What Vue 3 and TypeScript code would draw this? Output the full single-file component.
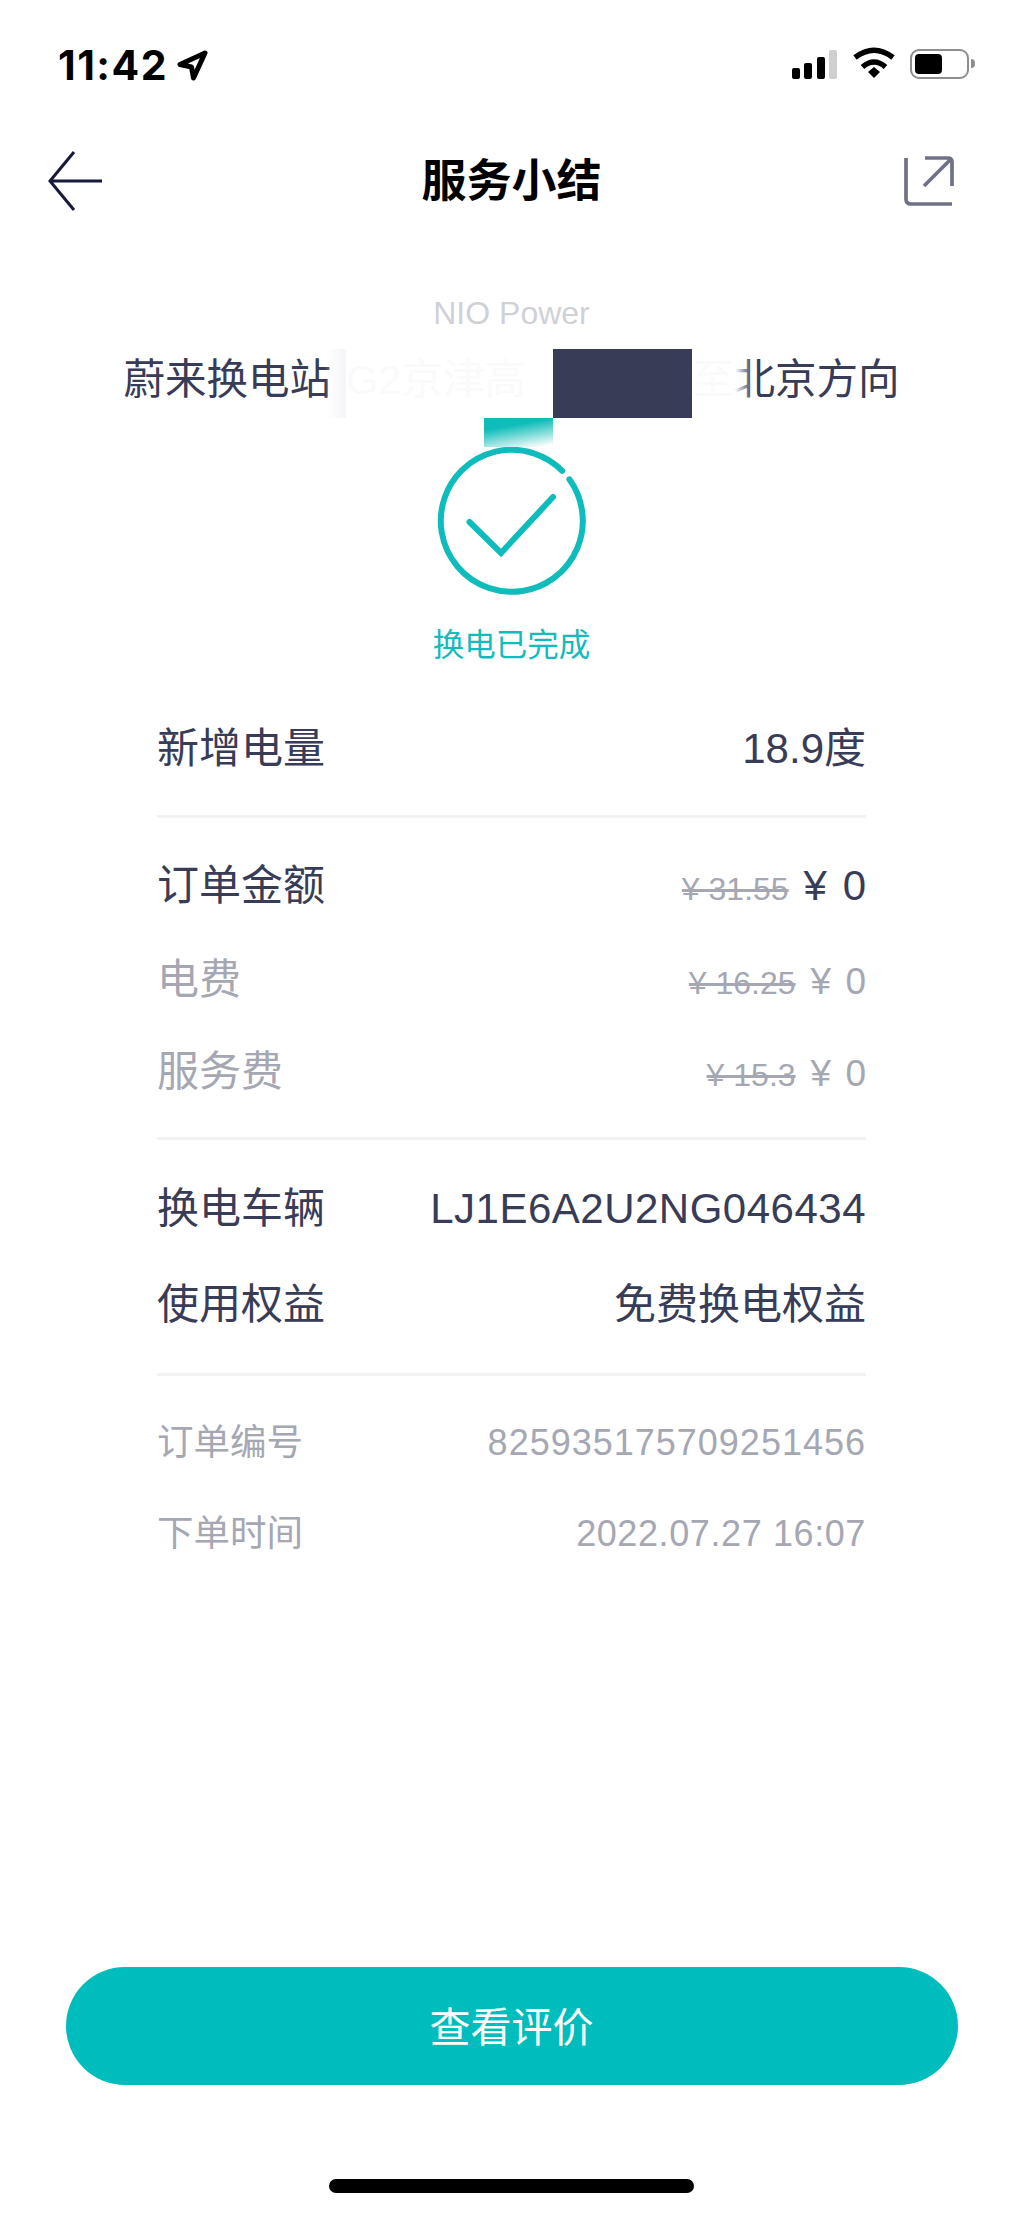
<template>
  <div class="page">
    <div class="status-bar">
      <div class="status-left">
        <span class="clock">11:42</span>
        <svg class="loc" width="32" height="32" viewBox="0 0 32 32">
          <path d="M28 4 L3 15.5 L14.5 18 L16.5 29 Z" fill="none" stroke="#000" stroke-width="5" stroke-linejoin="round" />
        </svg>
      </div>
      <div class="status-right">
        <div class="signal">
          <i class="bar b1"></i>
          <i class="bar b2"></i>
          <i class="bar b3"></i>
          <i class="bar b4"></i>
        </div>
        <svg class="wifi" width="44" height="32" viewBox="0 0 44 32">
          <path d="M3 10.5 Q22 -4 41 10.5" fill="none" stroke="#000" stroke-width="5.5" />
          <path d="M10.5 20 Q22 10 33.5 20" fill="none" stroke="#000" stroke-width="5.5" />
          <path d="M16 25 L22 20 L28 25 L22 31 Z" fill="#000" />
        </svg>
        <div class="battery">
          <div class="battery-fill"></div>
          <div class="battery-nub"></div>
        </div>
      </div>
    </div>

    <header class="nav">
      <svg class="back" width="56" height="60" viewBox="0 0 56 60">
        <path d="M54 30 H2 M26 1 L2 30 L26 59" fill="none" stroke="#16193a" stroke-width="3" />
      </svg>
      <h1 class="title">服务小结</h1>
      <svg class="share" width="50" height="50" viewBox="0 0 50 50">
        <path d="M2 2 V43 Q2 48 7 48 H48 M21 2 H44 Q48 2 48 6 V30 M46 4 L20 30" fill="none" stroke="#6f7186" stroke-width="3.7" />
      </svg>
    </header>

    <div class="brand">NIO Power</div>
    <div class="station">
      <span>蔚来换电站</span>
      <span class="faded faded-left">G2京津高</span>
      <span class="faded">至</span>
      <span>北京方向</span>
      <div class="smudge"></div>
      <div class="redact"></div>
      <div class="wipe"></div>
      <div class="teal-patch"></div>
    </div>

    <svg class="check" width="150" height="150" viewBox="0 0 150 150">
      <path d="M125.2 24.8 A71 71 0 1 0 132.4 33.3" fill="none" stroke="#0fbcbc" stroke-width="6" stroke-linecap="round" />
      <path d="M32.5 76 L64 107 L116 51" fill="none" stroke="#0fbcbc" stroke-width="6" stroke-linecap="round" />
    </svg>
    <div class="done">换电已完成</div>

    <div class="details">
      <section
        v-for="group in groups"
        :key="group.id"
        class="group"
        :class="`group--${group.id}`"
      >
        <div
          v-for="row in group.rows"
          :key="row.label"
          class="row"
          :class="row.kind"
        >
          <span class="label">{{ row.label }}</span>
          <span class="value">
            <s v-if="row.was" class="was">{{ row.was }}</s>
            <span :class="{ amount: row.was }">{{ row.value }}</span>
          </span>
        </div>
      </section>
    </div>

    <button type="button" class="cta">查看评价</button>
    <div class="home"></div>
  </div>
</template>

<script setup lang="ts">
type RowKind = 'main' | 'sub' | 'meta';

interface Row {
  label: string;
  value: string;
  was?: string;
  kind: RowKind;
}

const groups: { id: string; rows: Row[] }[] = [
  {
    id: 'energy',
    rows: [{ label: '新增电量', value: '18.9度', kind: 'main' }],
  },
  {
    id: 'price',
    rows: [
      { label: '订单金额', value: '¥ 0', was: '¥ 31.55', kind: 'main' },
      { label: '电费', value: '¥ 0', was: '¥ 16.25', kind: 'sub' },
      { label: '服务费', value: '¥ 0', was: '¥ 15.3', kind: 'sub' },
    ],
  },
  {
    id: 'car',
    rows: [
      { label: '换电车辆', value: 'LJ1E6A2U2NG046434', kind: 'main' },
      { label: '使用权益', value: '免费换电权益', kind: 'main' },
    ],
  },
  {
    id: 'order',
    rows: [
      { label: '订单编号', value: '825935175709251456', kind: 'meta' },
      { label: '下单时间', value: '2022.07.27 16:07', kind: 'meta' },
    ],
  },
];
</script>

<style>
html,
body {
  margin: 0;
  background: #fff;
}
</style>

<style scoped>
.page {
  width: 1023px;
  height: 2215px;
  display: flex;
  flex-direction: column;
  align-items: center;
  background: #fff;
  color: #383c56;
  font-family: 'Liberation Sans', 'Noto Sans CJK SC', sans-serif;
  overflow: hidden;
}

.status-bar {
  width: 100%;
  height: 126px;
  box-sizing: border-box;
  padding: 48px 54px 0 58px;
  display: flex;
  justify-content: space-between;
  align-items: flex-start;
}

.status-left {
  display: flex;
  align-items: center;
  gap: 9px;
}

.clock {
  font-family: Inter, sans-serif;
  font-size: 41px;
  font-weight: 700;
  line-height: 34px;
  letter-spacing: 1.5px;
  color: #000;
}

.status-right {
  display: flex;
  align-items: flex-end;
  height: 31px;
}

.signal {
  display: flex;
  align-items: flex-end;
  gap: 4.5px;
  height: 29px;
  margin-right: 15px;
}

.bar {
  width: 8px;
  border-radius: 2px;
  background: #000;
}

.b1 { height: 11px; }
.b2 { height: 16px; }
.b3 { height: 22px; }
.b4 { height: 29px; background: #cfcfcf; }

.wifi {
  margin-right: 14px;
}

.battery {
  position: relative;
  width: 59px;
  height: 30px;
  box-sizing: border-box;
  border: 2.5px solid #8e8e8e;
  border-radius: 9px;
  padding: 3px;
}

.battery-fill {
  width: 27px;
  height: 100%;
  background: #000;
  border-radius: 4px;
}

.battery-nub {
  position: absolute;
  right: -8px;
  top: 8px;
  width: 4px;
  height: 9px;
  background: #8e8e8e;
  border-radius: 0 4px 4px 0;
}

.nav {
  width: 100%;
  height: 110px;
  box-sizing: border-box;
  padding: 0 48px;
  display: grid;
  grid-template-columns: 1fr auto 1fr;
  align-items: center;
}

.share {
  justify-self: end;
  margin-right: 21px;
}

.title {
  margin: 0;
  padding-bottom: 8px;
  font-size: 45px;
  font-weight: 700;
  color: #000;
}

.brand {
  margin-top: 62px;
  font-size: 32px;
  line-height: 30px;
  color: #d0d1d6;
}

.station {
  position: relative;
  width: 776px;
  height: 69px;
  box-sizing: border-box;
  margin-top: 21px;
  padding-bottom: 16px;
  display: flex;
  align-items: center;
  font-size: 41.5px;
  white-space: nowrap;
}

.faded {
  color: #fafafb;
}

.faded-left {
  margin-left: 15px;
  margin-right: auto;
}

.redact {
  position: absolute;
  left: 429px;
  top: 0;
  width: 139px;
  height: 69px;
  background: #383c56;
}

.smudge {
  position: absolute;
  left: 201px;
  top: 0;
  width: 21px;
  height: 69px;
  background: linear-gradient(90deg, rgba(245, 245, 248, 0), #f5f5f8);
}

.wipe {
  position: absolute;
  left: 611px;
  top: 0;
  width: 18px;
  height: 69px;
  background: linear-gradient(90deg, #fff, rgba(255, 255, 255, 0));
}

.teal-patch {
  position: absolute;
  left: 360px;
  top: 69px;
  width: 69px;
  height: 29px;
  background: linear-gradient(170deg, #0fbcb9 30%, #fff 95%);
}

.check {
  margin-top: 28px;
  flex: none;
}

.done {
  margin-top: 31px;
  font-size: 31.5px;
  line-height: 36px;
  color: #12bcbc;
}

.details {
  width: 709px;
  margin-top: 37px;
}

.group {
  border-bottom: 3px solid #f1f2f4;
}

.group:last-child {
  border-bottom: none;
}

.group--energy {
  padding: 3px 0 20px;
}

.group--price {
  padding: 22px 0 19px;
}

.group--price .row:first-child {
  height: 94px;
}

.group--car {
  padding: 21px 0 20px;
}

.group--order {
  padding-top: 21px;
}

.row {
  display: flex;
  justify-content: space-between;
  align-items: baseline;
  height: 92px;
  line-height: 92px;
  font-size: 42px;
  white-space: nowrap;
}

.group--car .row {
  height: 96px;
  line-height: 96px;
}

.group--car .row:first-child .value {
  letter-spacing: 0.5px;
}

.sub {
  color: #a5a7b3;
}

.sub .value {
  font-size: 37px;
}

.meta {
  height: 91px;
  line-height: 91px;
  font-size: 36.5px;
  color: #a5a7b3;
}

.meta .value {
  font-size: 36px;
  letter-spacing: 1px;
}

.meta:last-child .value {
  letter-spacing: 0.6px;
}

.value {
  display: flex;
  align-items: baseline;
  gap: 15px;
}

.amount {
  letter-spacing: 2px;
  margin-right: -2px;
}

.was {
  font-size: 32px;
  color: #a5a7b3;
}

.cta {
  width: 892px;
  height: 118px;
  margin-top: auto;
  padding: 0 0 4px;
  flex: none;
  border: none;
  border-radius: 59px;
  background: #00bdbd;
  color: #fff;
  font-family: inherit;
  font-size: 41px;
  font-weight: 400;
}

.home {
  width: 365px;
  height: 14px;
  flex: none;
  margin: 94px 0 22px;
  border-radius: 7px;
  background: #000;
}
</style>
